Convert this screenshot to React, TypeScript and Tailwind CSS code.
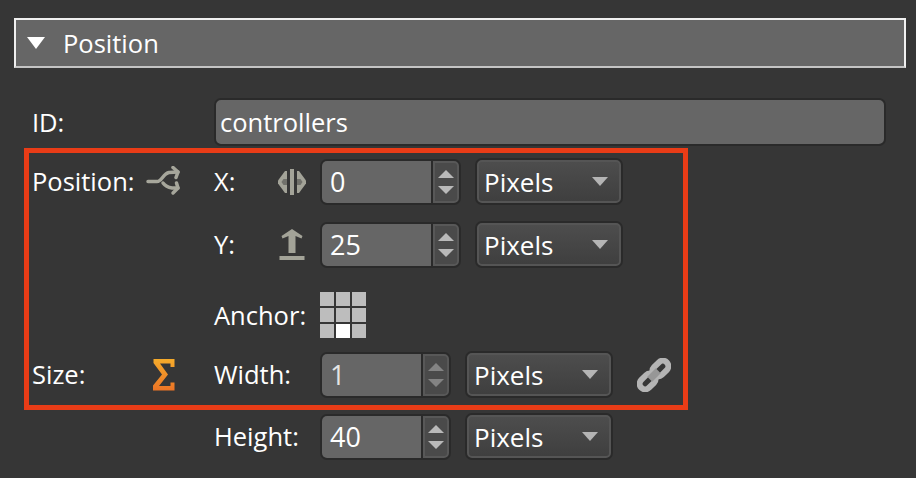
import type { ReactNode } from "react";

const FONT = "font-['Open_Sans','Noto_Sans',sans-serif]";

function SplitIcon() {
  return (
    <svg width="36" height="32" viewBox="0 0 36 32" fill="none" stroke="#a6a69b" strokeWidth="3.500" strokeLinecap="round" strokeLinejoin="round">
      <path d="M2 15.500h9c5 0 6-8 12-9l9-.5" />
      <path d="M27 1.500l5 4.500-2 5.500" />
      <path d="M17 17c3 4 6 4.500 9 5h6" />
      <path d="M30.500 17l1.500 5-5 5" />
    </svg>
  );
}

function CenterIcon() {
  return (
    <svg width="30" height="26" viewBox="0 0 30 26" fill="#a3a398">
      <rect x="13" y="0" width="4" height="26" />
      <path d="M10 2v22h-2l-7-9.500v-3l7-9.500z" />
      <path d="M20 2v22h2l7-9.500v-3l-7-9.500z" />
      <path d="M6.500 10h3.500v6h-3.500l-2-3z" fill="#363636" opacity="0.45" />
      <path d="M23.500 10h-3.500v6h3.500l2-3z" fill="#363636" opacity="0.45" />
    </svg>
  );
}

function TopIcon() {
  return (
    <svg width="26" height="32" viewBox="0 0 26 32" fill="#a3a398">
      <path d="M13 0l10.500 7-1 2.500-6-2.500v17h-7v-17l-6 2.500-1-2.500z" />
      <rect x="0.500" y="27" width="25" height="4" />
    </svg>
  );
}

function SigmaIcon() {
  return (
    <svg width="22" height="32" viewBox="0 0 22 32">
      <defs>
        <linearGradient id="sigma" x1="0" y1="0" x2="0" y2="1">
          <stop offset="0" stopColor="#f5ab2b" />
          <stop offset="1" stopColor="#ec7426" />
        </linearGradient>
      </defs>
      <path
        d="M0.500 0h21v8h-4v-3.500h-10.500l8 11-9 11.500h11.500v-3.500h4v8h-21.500v-5l9-11-8.500-11.500z"
        fill="url(#sigma)"
      />
    </svg>
  );
}

function LinkIcon() {
  return (
    <svg width="34" height="34" viewBox="0 0 34 34" fill="none">
      <g transform="rotate(-45 17 17)" stroke="#b4b4b4" strokeWidth="6">
        <rect x="-1" y="11.500" width="18" height="11" rx="5.500" />
        <rect x="17" y="11.500" width="18" height="11" rx="5.500" />
        <path d="M11 17h12" stroke="#979797" strokeWidth="7" />
      </g>
    </svg>
  );
}

function Arrow({ up, dim }: { up?: boolean; dim?: boolean }) {
  return (
    <span
      className={`h-0 w-0 border-x-[8px] border-x-transparent ${
        up ? "border-b-[8px]" : "border-t-[8px]"
      } ${dim ? "border-b-[#838383] border-t-[#838383]" : "border-b-[#b9b9b9] border-t-[#b9b9b9]"}`}
    />
  );
}

function Spinner({ value, wide, dim }: { value: string; wide?: boolean; dim?: boolean }) {
  return (
    <div className={`flex h-[46px] shrink-0 rounded-[7px] bg-[#2a2a2a] p-[2px] ${wide ? "w-[141px]" : "w-[131px]"}`}>
      <div className={`flex items-center rounded-l-[5px] bg-[#666666] pl-[8px] text-[27px] leading-none ${wide ? "w-[109px]" : "w-[99px]"} ${dim ? "text-[#e4e4e4]" : "text-white"}`}>
        {value}
      </div>
      <div className="w-[2px] bg-[#2a2a2a]" />
      <div className="flex flex-1 flex-col items-center justify-center gap-[8px] rounded-r-[5px] border-2 border-[#585858] bg-[#4a4a4a]">
        <Arrow up dim={dim} />
        <Arrow dim={dim} />
      </div>
    </div>
  );
}

function PixelSelect() {
  return (
    <div className="flex h-[47px] w-[148px] shrink-0 rounded-[7px] bg-[#2a2a2a] p-[2px]">
      <div className="flex flex-1 items-center justify-between rounded-[5px] border-2 border-[#555555] bg-gradient-to-b from-[#4d4d4d] to-[#3f3f3f] pl-[5px] pr-[11px] text-[26px] leading-none text-white">
        Pixels
        <span className="h-0 w-0 border-x-[8px] border-t-[9px] border-x-transparent border-t-[#b4b4b4]" />
      </div>
    </div>
  );
}

function Row({
  label,
  icon,
  field,
  fieldIcon,
  className,
  children,
}: {
  label?: string;
  icon?: ReactNode;
  field: string;
  fieldIcon?: ReactNode;
  className?: string;
  children: ReactNode;
}) {
  return (
    <div className={`flex h-[47px] items-center pl-[32px] text-[25.500px] text-white ${className ?? ""}`}>
      <span className="w-[114px] shrink-0">{label}</span>
      <span className="flex w-[36px] shrink-0 justify-center">{icon}</span>
      <span className="w-[32px] shrink-0" />
      <span className="w-[62px] shrink-0 whitespace-nowrap">{field}</span>
      <span className="flex w-[44px] shrink-0 justify-center pr-[12px]">{fieldIcon}</span>
      {children}
    </div>
  );
}

export default function App() {
  const cells = [0, 1, 2, 3, 4, 5, 6, 7, 8];

  return (
    <div className={`relative h-[478px] w-[916px] overflow-hidden bg-[#363636] pt-[18px] ${FONT}`}>
      <div className="mx-[14px] flex h-[50px] w-[892px] items-center border-2 border-[#f0f0f0] border-b-[#c4c4c4] bg-[#666666] pl-[11px] text-[25.500px] text-white">
        <span className="h-0 w-0 border-x-[9px] border-t-[12px] border-x-transparent border-t-white" />
        <span className="ml-[18px]">Position</span>
      </div>

      <div className="mt-[30px] flex h-[48px] items-center pl-[32px] text-[25.500px] text-white">
        <span className="w-[182px] shrink-0">ID:</span>
        <div className="flex h-[48px] w-[672px] items-center rounded-[7px] border-2 border-[#2a2a2a] bg-[#666666] pl-[4px]">
          controllers
        </div>
      </div>

      <Row label="Position:" icon={<SplitIcon />} field="X:" fieldIcon={<CenterIcon />} className="mt-[12px]">
        <Spinner value="0" wide />
        <span className="w-[14px] shrink-0" />
        <PixelSelect />
      </Row>

      <Row field="Y:" fieldIcon={<TopIcon />} className="mt-[16px]">
        <Spinner value="25" wide />
        <span className="w-[14px] shrink-0" />
        <PixelSelect />
      </Row>

      <div className="mt-[24px] flex h-[46px] items-center pl-[214px] text-[25.500px] text-white">
        <span className="w-[106px] shrink-0">Anchor:</span>
        <div className="grid grid-cols-[14px_14px_14px] gap-[2px]">
          {cells.map((cell) => (
            <span key={cell} className={`h-[14px] w-[14px] ${cell === 7 ? "bg-white" : "bg-[#bdbdbd]"}`} />
          ))}
        </div>
      </div>

      <Row label="Size:" icon={<SigmaIcon />} field="Width:" className="mt-[13px]">
        <Spinner value="1" dim />
        <span className="w-[14px] shrink-0" />
        <PixelSelect />
        <span className="ml-[24px] flex">
          <LinkIcon />
        </span>
      </Row>

      <Row field="Height:" className="mt-[15px]">
        <Spinner value="40" />
        <span className="w-[14px] shrink-0" />
        <PixelSelect />
      </Row>

      {/* annotation drawn over the form */}
      <div className="pointer-events-none absolute left-[24px] top-[148px] h-[262px] w-[664px] border-[5px] border-[#e93c17]" />
    </div>
  );
}
